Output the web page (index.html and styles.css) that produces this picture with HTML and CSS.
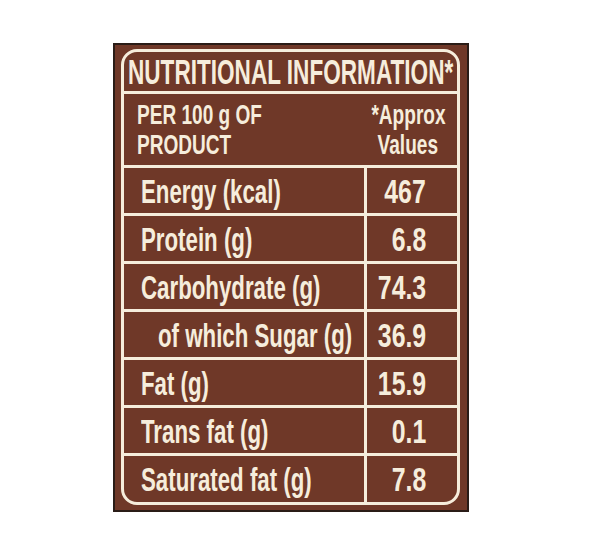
FILE: index.html
```html
<!DOCTYPE html>
<html lang="en">
<head>
<meta charset="utf-8">
<title>Nutritional Information</title>
<link rel="stylesheet" href="styles.css">
</head>
<body>
<div class="label">
  <div class="frame">
    <div class="title"><span class="sx">NUTRITIONAL INFORMATION*</span></div>
    <div class="head">
      <div class="head-left">
        <div class="hl"><span class="sx">PER 100 g OF</span></div>
        <div class="hl"><span class="sx">PRODUCT</span></div>
      </div>
      <div class="head-right">
        <div class="hl"><span class="sx sc">*Approx</span></div>
        <div class="hl"><span class="sx sc">Values</span></div>
      </div>
    </div>
    <div class="table">
      <div class="row"><div class="name"><span class="sx">Energy (kcal)</span></div><div class="val"><span class="sx sr">467</span></div></div>
      <div class="row"><div class="name"><span class="sx">Protein (g)</span></div><div class="val"><span class="sx sr">6.8</span></div></div>
      <div class="row"><div class="name"><span class="sx">Carbohydrate (g)</span></div><div class="val"><span class="sx sr">74.3</span></div></div>
      <div class="row"><div class="name indent"><span class="sx">of which Sugar (g)</span></div><div class="val"><span class="sx sr">36.9</span></div></div>
      <div class="row"><div class="name"><span class="sx">Fat (g)</span></div><div class="val"><span class="sx sr">15.9</span></div></div>
      <div class="row"><div class="name"><span class="sx">Trans fat (g)</span></div><div class="val"><span class="sx sr">0.1</span></div></div>
      <div class="row last"><div class="name"><span class="sx">Saturated fat (g)</span></div><div class="val"><span class="sx sr">7.8</span></div></div>
    </div>
  </div>
</div>
</body>
</html>
```

FILE: styles.css
```css
html, body {
  margin: 0;
  padding: 0;
  background: #ffffff;
}

body {
  font-family: "Liberation Sans", Arial, sans-serif;
  font-weight: bold;
  color: #f6eddc;
}

.label {
  box-sizing: border-box;
  width: 356px;
  height: 469px;
  margin: 43px 0 0 113px;
  padding: 4px 0 0 6px;
  background: #6f3828;
  border: 2px solid #2a1c17;
}

.frame {
  box-sizing: border-box;
  width: 339px;
  height: 456px;
  border: 3px solid #f6eddc;
  border-radius: 16px;
  display: flex;
  flex-direction: column;
  overflow: hidden;
}

.sx {
  display: inline-block;
  flex: none;
  white-space: nowrap;
  transform: scaleX(0.655);
  transform-origin: left center;
}

.sr {
  transform-origin: right center;
}

.sc {
  transform-origin: center center;
}

.title {
  height: 39px;
  border-bottom: 3px solid #f6eddc;
  font-size: 35px;
  line-height: 40px;
  padding-left: 4px;
  white-space: nowrap;
}

.title .sx {
  transform: scaleX(0.645);
}

.head {
  height: 71px;
  display: flex;
  justify-content: space-between;
  padding-top: 6px;
  box-sizing: border-box;
  font-size: 27px;
  line-height: 30px;
}

.head .sx {
  transform: scaleX(0.706);
}

.head-left {
  flex: none;
  padding-left: 13px;
}

.head-right {
  flex: none;
  width: 94px;
  margin-right: 2px;
}

.head-right .hl {
  display: flex;
  justify-content: center;
}

.table {
  flex: 1;
  display: flex;
  flex-direction: column;
}

.row {
  height: 48px;
  flex: none;
  box-sizing: border-box;
  border-top: 3px solid #f6eddc;
  display: flex;
  font-size: 34px;
  line-height: 42px;
}

.row.last {
  flex: 1;
}

.name {
  flex: none;
  box-sizing: border-box;
  width: 243px;
  min-width: 0;
  border-right: 3px solid #f6eddc;
  padding: 2px 0 0 17px;
  display: flex;
}

.name.indent {
  padding-left: 34px;
}

.val {
  flex: 1;
  min-width: 0;
  display: flex;
  justify-content: flex-end;
  padding: 2px 31px 0 0;
}

.val .sx {
  transform: scaleX(0.73);
}
```
